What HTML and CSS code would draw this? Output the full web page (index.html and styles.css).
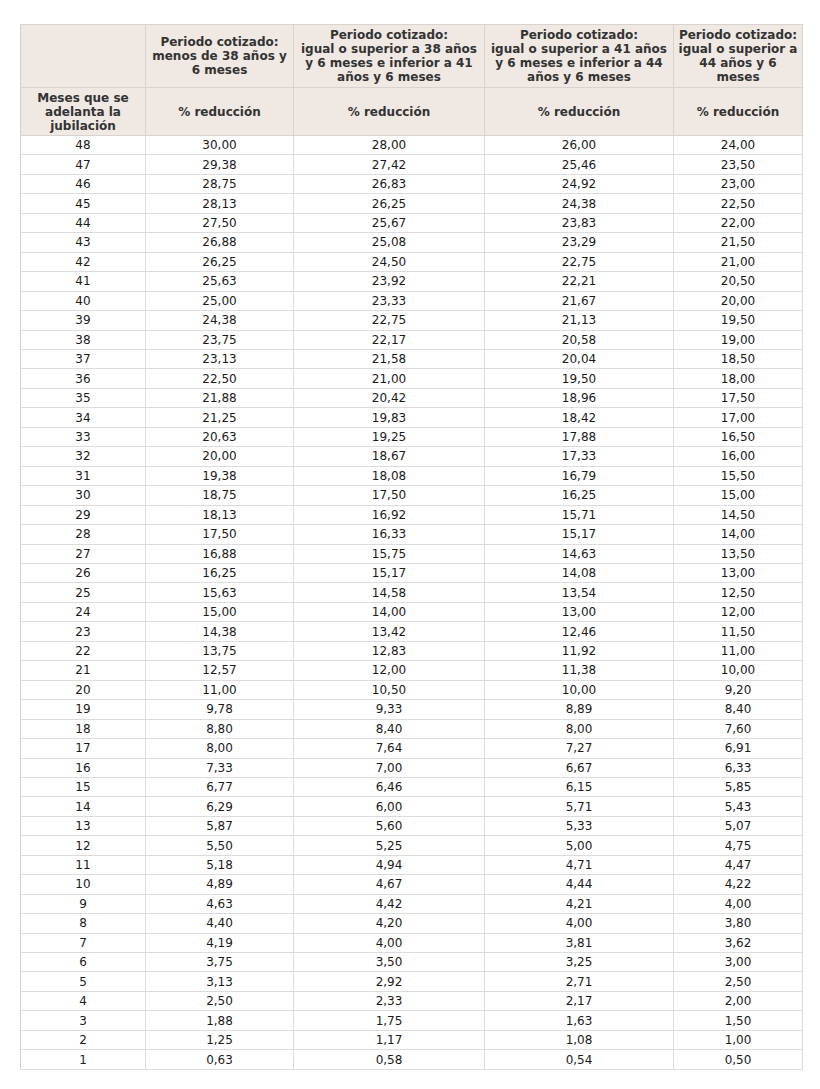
FILE: index.html
```html
<!DOCTYPE html>
<html lang="es">
<head>
<meta charset="utf-8">
<link rel="stylesheet" href="styles.css">
</head>
<body>
<div class="page">
<table class="tabla">
<colgroup>
<col class="c1"><col class="c2"><col class="c3"><col class="c4"><col class="c5">
</colgroup>
<thead>
<tr class="h1">
<th></th>
<th>Periodo cotizado:<br>menos de 38 años y<br>6 meses</th>
<th>Periodo cotizado:<br>igual o superior a 38 años<br>y 6 meses e inferior a 41<br>años y 6 meses</th>
<th>Periodo cotizado:<br>igual o superior a 41 años<br>y 6 meses e inferior a 44<br>años y 6 meses</th>
<th>Periodo cotizado:<br>igual o superior a<br>44 años y 6<br>meses</th>
</tr>
<tr class="h2">
<th>Meses que se<br>adelanta la<br>jubilación</th>
<th>% reducción</th>
<th>% reducción</th>
<th>% reducción</th>
<th>% reducción</th>
</tr>
</thead>
<tbody id="rows">
<tr><td>48</td><td>30,00</td><td>28,00</td><td>26,00</td><td>24,00</td></tr>
<tr><td>47</td><td>29,38</td><td>27,42</td><td>25,46</td><td>23,50</td></tr>
<tr><td>46</td><td>28,75</td><td>26,83</td><td>24,92</td><td>23,00</td></tr>
<tr><td>45</td><td>28,13</td><td>26,25</td><td>24,38</td><td>22,50</td></tr>
<tr><td>44</td><td>27,50</td><td>25,67</td><td>23,83</td><td>22,00</td></tr>
<tr><td>43</td><td>26,88</td><td>25,08</td><td>23,29</td><td>21,50</td></tr>
<tr><td>42</td><td>26,25</td><td>24,50</td><td>22,75</td><td>21,00</td></tr>
<tr><td>41</td><td>25,63</td><td>23,92</td><td>22,21</td><td>20,50</td></tr>
<tr><td>40</td><td>25,00</td><td>23,33</td><td>21,67</td><td>20,00</td></tr>
<tr><td>39</td><td>24,38</td><td>22,75</td><td>21,13</td><td>19,50</td></tr>
<tr><td>38</td><td>23,75</td><td>22,17</td><td>20,58</td><td>19,00</td></tr>
<tr><td>37</td><td>23,13</td><td>21,58</td><td>20,04</td><td>18,50</td></tr>
<tr><td>36</td><td>22,50</td><td>21,00</td><td>19,50</td><td>18,00</td></tr>
<tr><td>35</td><td>21,88</td><td>20,42</td><td>18,96</td><td>17,50</td></tr>
<tr><td>34</td><td>21,25</td><td>19,83</td><td>18,42</td><td>17,00</td></tr>
<tr><td>33</td><td>20,63</td><td>19,25</td><td>17,88</td><td>16,50</td></tr>
<tr><td>32</td><td>20,00</td><td>18,67</td><td>17,33</td><td>16,00</td></tr>
<tr><td>31</td><td>19,38</td><td>18,08</td><td>16,79</td><td>15,50</td></tr>
<tr><td>30</td><td>18,75</td><td>17,50</td><td>16,25</td><td>15,00</td></tr>
<tr><td>29</td><td>18,13</td><td>16,92</td><td>15,71</td><td>14,50</td></tr>
<tr><td>28</td><td>17,50</td><td>16,33</td><td>15,17</td><td>14,00</td></tr>
<tr><td>27</td><td>16,88</td><td>15,75</td><td>14,63</td><td>13,50</td></tr>
<tr><td>26</td><td>16,25</td><td>15,17</td><td>14,08</td><td>13,00</td></tr>
<tr><td>25</td><td>15,63</td><td>14,58</td><td>13,54</td><td>12,50</td></tr>
<tr><td>24</td><td>15,00</td><td>14,00</td><td>13,00</td><td>12,00</td></tr>
<tr><td>23</td><td>14,38</td><td>13,42</td><td>12,46</td><td>11,50</td></tr>
<tr><td>22</td><td>13,75</td><td>12,83</td><td>11,92</td><td>11,00</td></tr>
<tr><td>21</td><td>12,57</td><td>12,00</td><td>11,38</td><td>10,00</td></tr>
<tr><td>20</td><td>11,00</td><td>10,50</td><td>10,00</td><td>9,20</td></tr>
<tr><td>19</td><td>9,78</td><td>9,33</td><td>8,89</td><td>8,40</td></tr>
<tr><td>18</td><td>8,80</td><td>8,40</td><td>8,00</td><td>7,60</td></tr>
<tr><td>17</td><td>8,00</td><td>7,64</td><td>7,27</td><td>6,91</td></tr>
<tr><td>16</td><td>7,33</td><td>7,00</td><td>6,67</td><td>6,33</td></tr>
<tr><td>15</td><td>6,77</td><td>6,46</td><td>6,15</td><td>5,85</td></tr>
<tr><td>14</td><td>6,29</td><td>6,00</td><td>5,71</td><td>5,43</td></tr>
<tr><td>13</td><td>5,87</td><td>5,60</td><td>5,33</td><td>5,07</td></tr>
<tr><td>12</td><td>5,50</td><td>5,25</td><td>5,00</td><td>4,75</td></tr>
<tr><td>11</td><td>5,18</td><td>4,94</td><td>4,71</td><td>4,47</td></tr>
<tr><td>10</td><td>4,89</td><td>4,67</td><td>4,44</td><td>4,22</td></tr>
<tr><td>9</td><td>4,63</td><td>4,42</td><td>4,21</td><td>4,00</td></tr>
<tr><td>8</td><td>4,40</td><td>4,20</td><td>4,00</td><td>3,80</td></tr>
<tr><td>7</td><td>4,19</td><td>4,00</td><td>3,81</td><td>3,62</td></tr>
<tr><td>6</td><td>3,75</td><td>3,50</td><td>3,25</td><td>3,00</td></tr>
<tr><td>5</td><td>3,13</td><td>2,92</td><td>2,71</td><td>2,50</td></tr>
<tr><td>4</td><td>2,50</td><td>2,33</td><td>2,17</td><td>2,00</td></tr>
<tr><td>3</td><td>1,88</td><td>1,75</td><td>1,63</td><td>1,50</td></tr>
<tr><td>2</td><td>1,25</td><td>1,17</td><td>1,08</td><td>1,00</td></tr>
<tr><td>1</td><td>0,63</td><td>0,58</td><td>0,54</td><td>0,50</td></tr>
</tbody>
</table>
</div>
</body>
</html>
```

FILE: styles.css
```css
html, body {
  margin: 0;
  padding: 0;
  background: #ffffff;
}

.page {
  padding: 24px 0 0 20px;
}

.tabla {
  border-collapse: collapse;
  table-layout: fixed;
  width: 782px;
  font-family: "DejaVu Sans", Verdana, sans-serif;
  font-size: 12px;
  color: #1a1a1a;
}

.c1 { width: 125px; }
.c2 { width: 148px; }
.c3 { width: 191px; }
.c4 { width: 189px; }
.c5 { width: 129px; }

.tabla th,
.tabla td {
  border: 1px solid #d6d6d6;
  text-align: center;
  vertical-align: middle;
  padding: 0 2px;
}

.tabla th {
  background: #efe8e3;
  color: #333333;
  font-weight: bold;
  line-height: 14px;
  border-color: #d9d3cf;
}

.tabla .h1 th {
  height: 62px;
}

.tabla .h2 th {
  height: 47px;
}

.tabla td {
  height: 18.46px;
  line-height: 14px;
  border-color: #dcdcdc;
}

.tabla td:first-child,
.tabla th:first-child {
  border-left-color: #d0d0d0;
}
```
